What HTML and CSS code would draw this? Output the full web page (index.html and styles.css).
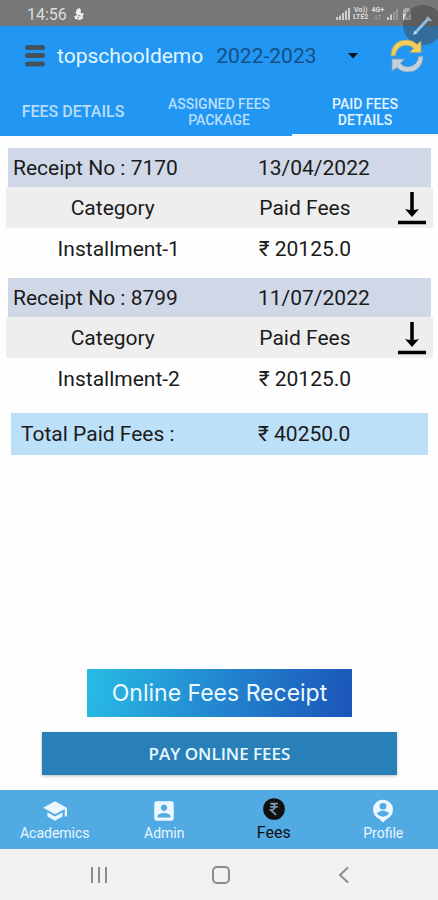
FILE: index.html
```html
<!DOCTYPE html>
<html lang="en">
<head>
<meta charset="utf-8">
<meta name="viewport" content="width=device-width, initial-scale=1">
<title>Paid fees details</title>
<link rel="stylesheet" href="styles.css">
</head>
<body>
<div class="screen">
  <div class="status">
    <span class="clock">14:56</span>
    <svg class="status-app" width="12" height="14" viewBox="0 0 12 14" aria-hidden="true"><path d="M4 2 6.500 1 8 3 7.500 6 11 6.500 9.500 9 10.500 11 7 13 2 12 1 9.500 4 8 2.500 6z" fill="#eee"/><path d="M5 8.500 7.500 9M4 10.800h2" stroke="#888"/></svg>
    <div class="status-right">
      <svg width="14" height="12" viewBox="0 0 14 12" aria-hidden="true"><path d="M1 12V9M4 12V7.500M7 12V5M10 12V2.500M13 12V0" stroke="#ddd" stroke-width="1.700"/></svg>
      <span class="tiny"><span>Vo))</span><span>LTE2</span></span>
      <span class="tiny"><span>4G+</span><span>↓↑</span></span>
      <svg width="12" height="12" viewBox="0 0 12 12" aria-hidden="true"><path d="M1 12V9M4 12V6.500" stroke="#ccc" stroke-width="2"/><path d="M7 12V4M10 12V1" stroke="#999" stroke-width="2"/></svg>
      <svg width="10" height="12" viewBox="0 0 10 12" aria-hidden="true"><path d="M2.500 1.500V0h5v1.500H9V12H1V1.500z" fill="#aaa"/><path d="M1 6h8v6H1z" fill="#ddd"/><path d="m4 4 3 3H4l3 3" stroke="#777" fill="none"/></svg>
    </div>
  </div>

  <header class="appbar">
    <button class="icon-button menu" aria-label="Menu"><svg width="20" height="24" viewBox="0 0 20 24"><path d="M2.500 3.500h15M2.500 11.500h15M2.500 20h15" stroke="#43525f" stroke-width="5" stroke-linecap="round"/></svg></button>
    <h1>topschooldemo</h1>
    <div class="year">
      <select aria-label="School year"><option>2022-2023</option></select>
      <svg width="10" height="6" viewBox="0 0 10 6" aria-hidden="true"><path d="M0 0h10L5 5.500z" fill="#06121f"/></svg>
    </div>
    <button class="icon-button refresh" aria-label="Refresh"><svg width="34" height="34" viewBox="0 0 34 34"><path d="M1 17C1 7 7 1 16.500 1c4.500 0 8 1.800 10.500 4.500L31 2v11.500H19.500l4-4C18 3.500 6.500 6 5.500 16.500z" fill="#f6cd5b" stroke="#a4a276" stroke-width=".8"/><path d="M33 17c0 10-6 16-15.500 16-4.500 0-8-1.800-10.500-4.500L2 32V20h12.500l-4 4.500C16 30.500 27.500 28 28.500 17.500z" fill="#c3d1dc" stroke="#8199ac" stroke-width=".8"/></svg></button>
  </header>

  <div class="pen-layer" aria-hidden="true"><svg class="pen" width="42" height="42" viewBox="0 0 42 42"><circle cx="21" cy="21" r="20" fill="#444" fill-opacity=".5"/><path d="M14 28 27 14" stroke="#8fbde0" stroke-width="3"/><path d="m25 13 4 4" stroke="#a4b3bf" stroke-width="2"/><path d="m11 31 1.500-4.500 3 3z" fill="#b7dcf8"/></svg></div>

  <nav class="tabs" aria-label="Fees sections">
    <a class="single" href="#details">FEES DETAILS</a>
    <a href="#package">ASSIGNED FEES PACKAGE</a>
    <a class="active" href="#paid" aria-current="page">PAID FEES DETAILS</a>
  </nav>

  <main>
    <section class="receipt">
      <h2><span>Receipt No : 7170</span><span>13/04/2022</span></h2>
      <table>
        <thead><tr><th>Category</th><th>Paid Fees</th><td class="save"><button class="icon-button" aria-label="Download receipt 7170"><svg width="30" height="34" viewBox="0 0 30 34"><path d="M15 1v20M1 31.500h28" stroke="#000" stroke-width="3.500"/><path d="M8 18q7 2 14 0l-7 8z" fill="#000"/></svg></button></td></tr></thead>
        <tbody><tr><td>Installment-1</td><td>₹ 20125.0</td><td></td></tr></tbody>
      </table>
    </section>
    <section class="receipt">
      <h2><span>Receipt No : 8799</span><span>11/07/2022</span></h2>
      <table>
        <thead><tr><th>Category</th><th>Paid Fees</th><td class="save"><button class="icon-button" aria-label="Download receipt 8799"><svg width="30" height="34" viewBox="0 0 30 34"><path d="M15 1v20M1 31.500h28" stroke="#000" stroke-width="3.500"/><path d="M8 18q7 2 14 0l-7 8z" fill="#000"/></svg></button></td></tr></thead>
        <tbody><tr><td>Installment-2</td><td>₹ 20125.0</td><td></td></tr></tbody>
      </table>
    </section>
    <div class="total"><span>Total Paid Fees :</span><span>₹ 40250.0</span></div>
    <div class="actions">
      <button class="online">Online Fees Receipt</button>
      <button class="pay">PAY ONLINE FEES</button>
    </div>
  </main>

  <nav class="bottom" aria-label="Main">
    <a href="#academics"><svg width="26" height="26" viewBox="0 0 24 24"><path fill="currentColor" d="M5 13.180v4L12 21l7-3.820v-4L12 17l-7-3.820zM12 3 1 9l11 6 9-4.910V17h2V9L12 3z"/></svg>Academics</a>
    <a href="#admin"><svg width="26" height="26" viewBox="0 0 24 24"><path fill="currentColor" d="M3 5v14c0 1.100.89 2 2 2h14c1.100 0 2-.9 2-2V5c0-1.100-.9-2-2-2H5c-1.110 0-2 .9-2 2zm12 4c0 1.660-1.340 3-3 3s-3-1.340-3-3 1.340-3 3-3 3 1.340 3 3zm-9 8c0-2 4-3.100 6-3.100s6 1.100 6 3.100v1H6v-1z"/></svg>Admin</a>
    <a class="active" href="#fees" aria-current="page"><svg width="26" height="26" viewBox="0 0 24 24"><circle cx="12" cy="12" r="10" fill="currentColor"/><path d="M8.500 7h7M8.500 10h7M9 7c5 0 5 6 0 6l5 4.500" fill="none" stroke="#7a9db5" stroke-width="1.500"/></svg>Fees</a>
    <a href="#profile"><svg width="26" height="26" viewBox="0 0 24 24"><path fill="currentColor" fill-rule="evenodd" d="M12 1.500a9.300 9.300 0 0 0-3.500 17.900L12 22.500l3.500-3.100A9.300 9.300 0 0 0 12 1.500zm0 3a3.200 3.200 0 1 1 0 6.400 3.200 3.200 0 0 1 0-6.400zm0 12.700c-2.300 0-4.300-1.100-5.500-2.800 0-1.700 3.700-2.700 5.500-2.700s5.500 1 5.500 2.700a6.700 6.700 0 0 1-5.500 2.800z"/></svg>Profile</a>
  </nav>

  <div class="system">
    <button class="icon-button" aria-label="Recent apps"><svg width="18" height="18" viewBox="0 0 18 18"><path d="M2 1v16M9 1v16M16 1v16" stroke="#8c8c8c" stroke-width="2"/></svg></button>
    <button class="icon-button" aria-label="Home"><svg width="18" height="18" viewBox="0 0 18 18"><rect x="1" y="1" width="16" height="16" rx="4" fill="none" stroke="#8c8c8c" stroke-width="2"/></svg></button>
    <button class="icon-button" aria-label="Back"><svg width="18" height="18" viewBox="0 0 18 18"><path d="M13 1.500 5 9l8 7.500" fill="none" stroke="#8c8c8c" stroke-width="2"/></svg></button>
  </div>
</div>
</body>
</html>
```
FILE: styles.css
```css
* { box-sizing: border-box; }
body { margin: 0; background: #fefefe; color: #1b1b1b; font-family: Roboto, "Noto Sans", sans-serif; }
svg { display: block; flex: none; }
a { color: inherit; text-decoration: none; }
button { font-family: inherit; border: 0; border-radius: 0; cursor: pointer; }
.icon-button { padding: 0; background: none; }

.screen { position: relative; display: flex; flex-direction: column; min-height: 100vh; }

.status { display: flex; align-items: center; height: 26px; padding: 2px 26px 0 27px; background: #777; color: #dedede; }
.clock { font-size: 16px; }
.status-app { margin-left: 6px; }
.status-right { display: flex; align-items: center; gap: 3px; margin-left: auto; }
.tiny { display: flex; flex-direction: column; align-items: center; font-size: 7px; line-height: 7px; font-weight: 700; }
.pen-layer { position: absolute; top: 0; right: 0; width: 36px; height: 60px; overflow: hidden; pointer-events: none; }
.pen { margin: 4px 0 0; }

.appbar { display: flex; align-items: center; height: 60px; padding: 0 14px 0 25px; background: #2196f3; }
.appbar h1 { margin: 0 0 0 12px; color: #e3f4ff; font-size: 21px; font-weight: 400; }
.refresh { position: relative; z-index: 1; }
.year { position: relative; flex: 1; margin: 0 32px 0 13px; }
.year select { display: block; width: 100%; padding: 0; border: 0; background: none; appearance: none; color: #164f83; font: 21px Roboto, sans-serif; }
.year svg { position: absolute; top: 50%; right: 0; margin-top: -3px; pointer-events: none; }

.tabs { display: grid; grid-template-columns: repeat(3, 1fr); height: 50px; background: #2196f3; color: #b9defb; font-size: 14px; line-height: 16px; font-weight: 500; text-align: center; }
.tabs a { display: flex; align-items: center; justify-content: center; padding: 4px 20px 0; border-bottom: 2px solid transparent; }
.tabs .single { padding: 4px 8px 0; font-size: 16px; }
.tabs .active { border-color: #f2f8fc; color: #e6f4ff; }

main { flex: 1; display: flex; flex-direction: column; padding: 12px 5px 15px 6px; font-size: 21px; line-height: 24px; }
.receipt { margin-bottom: 9px; }
.receipt h2 { display: grid; grid-template-columns: 1fr 173px; align-items: center; height: 39px; margin: 0 2px; padding-left: 5px; background: #d0d8e8; font-size: 21px; font-weight: 400; }
table { width: 100%; table-layout: fixed; border-collapse: collapse; text-align: center; }
thead { background: #eee; }
tr { height: 41px; }
th, td { width: 50%; padding: 0; font-weight: 400; }
th:nth-child(2) { width: 40%; }
td:first-child { padding-left: 12px; }
.save { width: 10%; line-height: 0; }
.save svg { margin: 0 auto; }
.total { display: grid; grid-template-columns: 1fr 170px; align-items: center; height: 42px; margin: 5px 5px 0; padding-left: 10px; background: #bce0f8; }
.actions { display: flex; flex-direction: column; align-items: center; gap: 15px; margin-top: auto; }
.online { width: 62%; height: 48px; background: linear-gradient(100deg, #28bce4, #2386d0 50%, #1b55b8); color: #edfaff; font-family: Inter, sans-serif; font-size: 23px; }
.pay { width: 83%; height: 43px; background: #2980b9; box-shadow: 0 1px 3px #0004; color: #e9f7ff; font-family: "Open Sans", sans-serif; font-size: 17px; font-weight: 600; }

.bottom { display: grid; grid-template-columns: repeat(4, 1fr); height: 59px; background: #52aae3; color: #eaf7ff; font-size: 14px; line-height: 18px; }
.bottom a { display: flex; flex-direction: column; align-items: center; padding-top: 8px; }
.bottom .active { padding-top: 6px; color: #111; font-size: 16px; line-height: 22px; }
.system { display: flex; justify-content: space-around; align-items: center; height: 51px; padding: 0 33px 0 38px; background: #f1f1f1; }
```
